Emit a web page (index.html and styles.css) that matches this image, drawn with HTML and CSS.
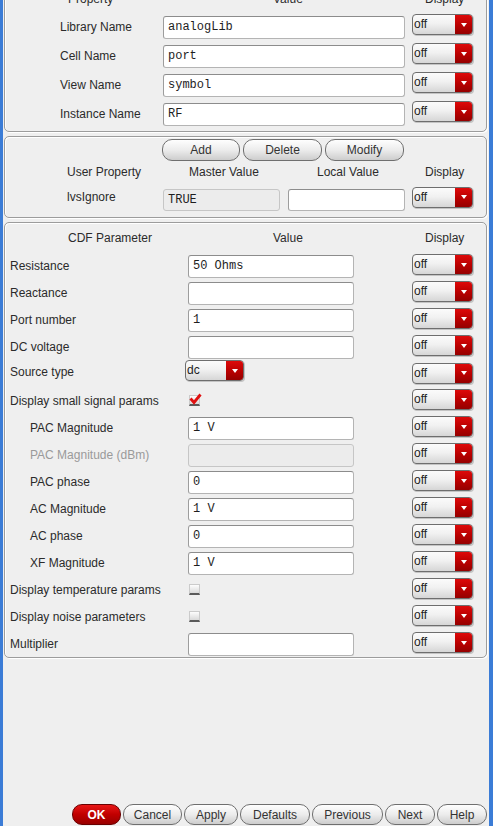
FILE: index.html
```html
<!DOCTYPE html>
<html>
<head>
<meta charset="utf-8">
<title>Edit Object Properties</title>
<link rel="stylesheet" href="styles.css">
</head>
<body>
<div class="window">

  <section class="group g-props">
    <div class="row r29 head">
      <span class="hp1">Property</span><span class="hp2">Value</span><span class="hp3">Display</span>
    </div>
    <div class="row r29"><span class="label">Library Name</span><div class="field f-wide">analogLib</div><div class="cycle up"><span>off</span><i></i></div></div>
    <div class="row r29"><span class="label">Cell Name</span><div class="field f-wide">port</div><div class="cycle up"><span>off</span><i></i></div></div>
    <div class="row r29"><span class="label">View Name</span><div class="field f-wide">symbol</div><div class="cycle up"><span>off</span><i></i></div></div>
    <div class="row r29"><span class="label">Instance Name</span><div class="field f-wide">RF</div><div class="cycle up"><span>off</span><i></i></div></div>
  </section>

  <section class="group g-user">
    <div class="tools">
      <button class="btn b-add">Add</button>
      <button class="btn b-del">Delete</button>
      <button class="btn b-mod">Modify</button>
    </div>
    <div class="urow uhead">
      <span class="hu1">User Property</span><span class="hu2">Master Value</span><span class="hu3">Local Value</span><span class="hu4">Display</span>
    </div>
    <div class="urow udata">
      <span class="label ul">lvsIgnore</span>
      <div class="field f-half off">TRUE</div>
      <div class="field f-half"></div>
      <div class="cycle"><span>off</span><i></i></div>
    </div>
  </section>

  <section class="group g-cdf">
    <div class="crow chead">
      <span class="hc1">CDF Parameter</span><span class="hc2">Value</span><span class="hc3">Display</span>
    </div>
    <div class="crow"><span class="label">Resistance</span><div class="field f-mid">50 Ohms</div><div class="cycle"><span>off</span><i></i></div></div>
    <div class="crow"><span class="label">Reactance</span><div class="field f-mid"></div><div class="cycle"><span>off</span><i></i></div></div>
    <div class="crow"><span class="label">Port number</span><div class="field f-mid">1</div><div class="cycle"><span>off</span><i></i></div></div>
    <div class="crow"><span class="label">DC voltage</span><div class="field f-mid"></div><div class="cycle"><span>off</span><i></i></div></div>
    <div class="crow"><span class="label lift">Source type</span><div class="cycle src"><span>dc</span><i></i></div><div class="cycle"><span>off</span><i></i></div></div>
    <div class="crow"><span class="label">Display small signal params</span><div class="check"><svg width="13" height="12" viewBox="0 0 13 12"><path d="M1.5 5.5 L5 9.5 L11.5 1.5" fill="none" stroke="#e01010" stroke-width="2.8"/></svg></div><div class="cycle"><span>off</span><i></i></div></div>
    <div class="crow"><span class="label sub">PAC Magnitude</span><div class="field f-mid">1 V</div><div class="cycle"><span>off</span><i></i></div></div>
    <div class="crow"><span class="label sub dim">PAC Magnitude (dBm)</span><div class="field f-mid off"></div><div class="cycle"><span>off</span><i></i></div></div>
    <div class="crow"><span class="label sub">PAC phase</span><div class="field f-mid">0</div><div class="cycle"><span>off</span><i></i></div></div>
    <div class="crow"><span class="label sub">AC Magnitude</span><div class="field f-mid">1 V</div><div class="cycle"><span>off</span><i></i></div></div>
    <div class="crow"><span class="label sub">AC phase</span><div class="field f-mid">0</div><div class="cycle"><span>off</span><i></i></div></div>
    <div class="crow"><span class="label sub">XF Magnitude</span><div class="field f-mid">1 V</div><div class="cycle"><span>off</span><i></i></div></div>
    <div class="crow"><span class="label">Display temperature params</span><div class="check"></div><div class="cycle"><span>off</span><i></i></div></div>
    <div class="crow"><span class="label">Display noise parameters</span><div class="check"></div><div class="cycle"><span>off</span><i></i></div></div>
    <div class="crow"><span class="label">Multiplier</span><div class="field f-mid"></div><div class="cycle"><span>off</span><i></i></div></div>
  </section>

  <div class="spacer"></div>

  <div class="actions">
    <button class="btn ok w-ok">OK</button>
    <button class="btn w-cancel">Cancel</button>
    <button class="btn w-apply">Apply</button>
    <button class="btn w-defaults">Defaults</button>
    <button class="btn w-prev">Previous</button>
    <button class="btn w-next">Next</button>
    <button class="btn w-help">Help</button>
  </div>

</div>
</body>
</html>
```

FILE: styles.css
```css
html, body {
  margin: 0;
  padding: 0;
  height: 100%;
  overflow: hidden;
}

body {
  background: #efefef;
  font-family: "Liberation Sans", Arial, sans-serif;
  font-size: 12px;
  color: #2b2b2b;
}

.window {
  height: 826px;
  box-sizing: border-box;
  border-left: 3px solid #3b7cd6;
  border-right: 4px solid #3b7cd6;
  display: flex;
  flex-direction: column;
}

/* etched group boxes */
.group {
  margin: 0 2px 0 1px;
  border: 1px solid #9c9c9c;
  border-radius: 5px;
  box-shadow: inset 1px 1px 0 #ffffff, 1px 1px 0 #ffffff;
}

.g-props {
  margin-top: -21px;
  padding: 3px 0 3px 55px;
}

.g-user {
  margin-top: 4px;
  padding: 2px 0 4px 55px;
}

.g-cdf {
  margin-top: 4px;
  padding: 0 0 0 5px;
}

.label {
  white-space: nowrap;
}

/* property rows */
.row {
  display: grid;
  grid-template-columns: 103px 249px 61px;
  align-items: center;
}

.r29 {
  height: 29px;
}

.head span {
  padding-top: 3px;
}

.hp1 { padding-left: 8px; }
.hp2 { padding-left: 110px; }
.hp3 { padding-left: 13px; }

/* text fields */
.field {
  box-sizing: border-box;
  height: 23px;
  background: #ffffff;
  border: 1px solid #b4b4b4;
  border-top-color: #8c8c8c;
  border-left-color: #9d9d9d;
  border-radius: 3px;
  padding-left: 4px;
  font-family: "Liberation Mono", "Courier New", monospace;
  font-size: 12px;
  line-height: 21px;
  color: #1e1e1e;
  margin-top: 2px;
}

.field.off {
  background: #ececec;
  border-color: #c6c6c6;
}

.f-wide { width: 242px; }
.f-mid { width: 166px; }
.f-half { width: 117px; height: 22px; line-height: 20px; margin-top: 4px; }

/* cyclic (drop-down) fields */
.cycle {
  box-sizing: border-box;
  width: 61px;
  height: 21px;
  display: flex;
  border: 1px solid #6e6e6e;
  border-radius: 4px;
  overflow: hidden;
  background: linear-gradient(#fbfbfb, #f1f1f1 45%, #d6d6d6);
  box-shadow: 1px 1px 0 #c4c4c4;
  margin-bottom: 2px;
}

.cycle.up {
  margin-bottom: 4px;
}

.cycle span {
  flex: 1;
  padding-left: 1px;
  line-height: 19px;
  font-size: 12px;
  color: #222;
}

.cycle i {
  width: 17px;
  display: flex;
  align-items: center;
  justify-content: center;
  background: linear-gradient(#dd0a0a, #b80000 55%, #950000);
}

.cycle i::after {
  content: "";
  border-left: 3px solid transparent;
  border-right: 3px solid transparent;
  border-top: 4px solid #ffffff;
}

.cycle.src {
  width: 59px;
  margin-left: -3px;
  margin-bottom: 7px;
}

/* buttons */
.btn {
  box-sizing: border-box;
  height: 21px;
  padding: 0;
  border: 1px solid #6f6f6f;
  border-radius: 10px;
  background: linear-gradient(#fefefe, #ececec 50%, #cdcdcd);
  font-family: "Liberation Sans", Arial, sans-serif;
  font-size: 12px;
  color: #333;
  display: flex;
  align-items: center;
  justify-content: center;
}

.tools {
  display: flex;
  gap: 3px;
  padding-left: 102px;
}

.tools .btn {
  height: 22px;
}

.b-add { width: 78px; }
.b-del { width: 79px; }
.b-mod { width: 79px; }

/* user property rows */
.urow {
  display: grid;
  grid-template-columns: 103px 125px 124px 61px;
  align-items: center;
}

.uhead {
  height: 22px;
}

.udata {
  height: 30px;
}

.hu1 { padding-left: 7px; }
.hu2 { padding-left: 26px; }
.hu3 { padding-left: 29px; }
.hu4 { padding-left: 13px; }

.ul {
  padding-left: 7px;
  margin-bottom: 2px;
}

/* CDF parameter rows */
.crow {
  display: grid;
  grid-template-columns: 178px 224px 61px;
  align-items: center;
  height: 27px;
}

.chead {
  height: 29px;
}

.hc1 { padding-left: 58px; }
.hc2 { padding-left: 85px; }
.hc3 { padding-left: 13px; }

.sub { padding-left: 20px; }
.dim { color: #9a9a9a; }
.lift { margin-bottom: 4px; }

.check {
  box-sizing: border-box;
  width: 11px;
  height: 11px;
  margin-left: 1px;
  background: linear-gradient(#fdfdfd, #d9d9d9);
  border: 1px solid #cbcbcb;
  border-bottom: 2px solid #5a5a5a;
}

.check svg {
  display: block;
  margin: -3px 0 0 -1px;
  overflow: visible;
}

.spacer {
  flex: 1;
}

/* dialog action buttons */
.actions {
  display: flex;
  justify-content: flex-end;
  gap: 2px;
  margin: 0 2px 1px 0;
}

.btn.ok {
  background: linear-gradient(#e81616, #c00000 50%, #990000);
  border-color: #6a0000;
  color: #ffffff;
  font-weight: bold;
}

.w-ok { width: 49px; }
.w-cancel { width: 59px; }
.w-apply { width: 54px; }
.w-defaults { width: 70px; }
.w-prev { width: 71px; }
.w-next { width: 50px; }
.w-help { width: 50px; }
```
